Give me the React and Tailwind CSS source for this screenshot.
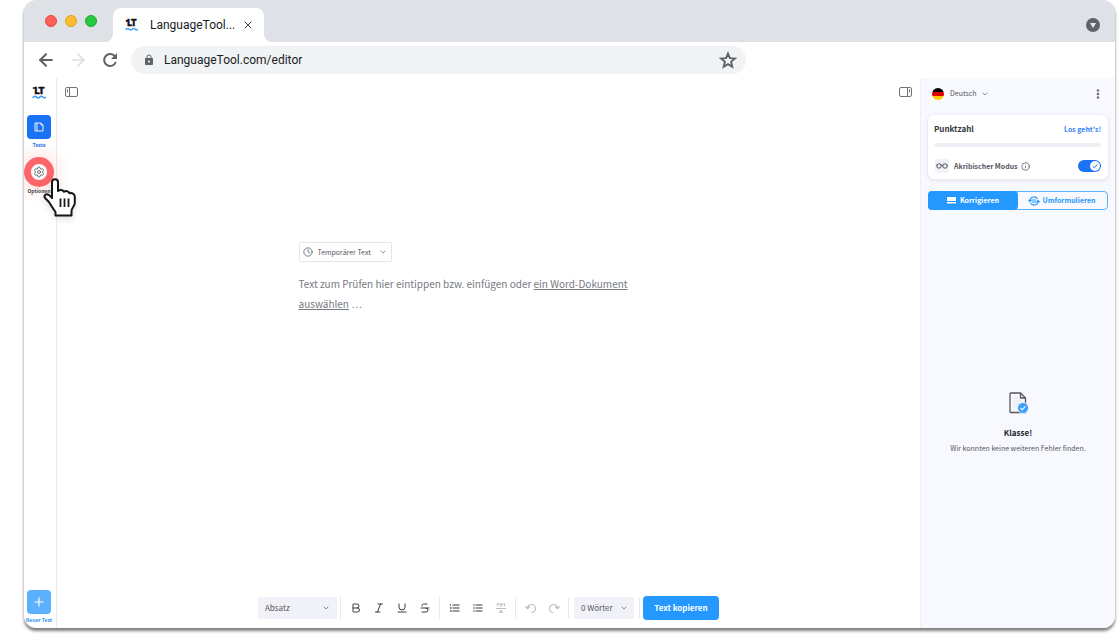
import { ArrowLeft, ArrowRight, ChevronDown, X, Plus, Settings, Clock, Info, Bold, Italic, Underline, Strikethrough } from 'lucide-react';
import { MdLock, MdFormatListNumbered, MdFormatListBulleted } from 'react-icons/md';

const Logo = ({ className }) => (
  <svg viewBox="0 0 14 13" className={`overflow-visible ${className}`} role="img" aria-label="LanguageTool">
    <text x="7.5" y="8" textAnchor="middle" fontFamily="Roboto, sans-serif" fontSize="9.5" fontWeight="900" fill="#111" stroke="#111" strokeWidth=".5">LT</text>
    <path d="M.8 2h2.500" stroke="#111" strokeWidth="1.700" />
    <path d="M1 11.500c1.200-1.600 2.300-1.600 3.500-.4s2.300 1.200 3.300 0 2.200-1.200 3.200 0 1.800.9 2.400.2" fill="none" stroke="#3b9cf5" strokeWidth="1.500" strokeLinecap="round" />
  </svg>
);

const PanelIcon = ({ right }) => (
  <svg viewBox="0 0 13 10" className="h-[10px] w-[13px]" fill="none" stroke="#747478">
    <rect x=".5" y=".5" width="12" height="9" rx="1.5" />
    <path d={right ? 'M8.5 1v8M10.5 2.5v3' : 'M4.5 1v8M2.5 2.5v3'} />
  </svg>
);

const Divider = () => <span className="mx-[3px] h-[22px] w-px bg-[#e9e9f2]" />;

const Dropdown = ({ label, value, className, iconClass }) => (
  <div className="relative flex items-center">
    <select aria-label={label} className={`appearance-none text-[#55565f] outline-none ${className}`}>
      <option>{value}</option>
    </select>
    <ChevronDown className={`pointer-events-none absolute size-2 text-[#55565f] ${iconClass}`} />
  </div>
);

const ToolButton = ({ label, icon: Icon, muted }) => (
  <button aria-label={label} className={`flex h-[22px] w-[23px] items-center justify-center ${muted ? 'text-[#bcbcc4]' : 'text-[#3c3d45]'}`}>
    <Icon className="size-3" />
  </button>
);

const ClearFormat = ({ className }) => (
  <svg viewBox="0 0 12 12" className={className} fill="none" stroke="currentColor" strokeWidth="1.200">
    <path d="M2.500 4V2h7v2M6 2v3M1 6.500h10" />
    <path d="M6 8l2 2.500H4z" fill="currentColor" strokeWidth=".5" />
  </svg>
);

const Undo = ({ className }) => (
  <svg viewBox="0 0 12 12" className={className} fill="none" stroke="currentColor" strokeWidth="1.200">
    <path d="M2.500 6.500a4 4 0 1 1 4 4M.5 4.500l2 2.200 2.200-2" />
  </svg>
);

const Redo = ({ className }) => (
  <svg viewBox="0 0 12 12" className={className} fill="none" stroke="currentColor" strokeWidth="1.200">
    <path d="M9.500 6.500a4 4 0 1 0-4 4M11.500 4.500l-2 2.200-2.200-2" />
  </svg>
);

const Hand = () => (
  <svg viewBox="0 0 34 40" className="absolute top-[21px] left-[19px] h-10 w-[34px] drop-shadow-md" aria-hidden="true">
    <path
      d="M9 20V4.500c0-4.200 6-4.200 6 0V13c1.500-1.500 5-1.300 6 .8 1.600-1.300 4.800-.8 5.500 1.400 2.400-.8 5.300.6 5.300 3.600V25c0 3-3.300 5-3.300 8v4.500h-16V34c-2.500-3.500-4.500-6.500-6.500-10L2 20c-1.600-2.500 1.200-4.800 3.600-3.200C7.200 17.800 8 19 9 20z"
      fill="white"
      stroke="#161616"
      strokeWidth="2"
      strokeLinejoin="round"
    />
    <path d="M17.500 20.500V29M21.500 20.500V29M25.500 20.500V29" stroke="#161616" strokeWidth="1.800" />
  </svg>
);

const BrowserBar = () => (
  <header className="font-[Roboto,sans-serif] text-[#202124]">
    <div className="flex h-[42px] items-end bg-[#dee1e6] pr-[15px] pl-[21px]">
      <div className="mr-4 flex h-full items-center gap-2">
        <button aria-label="Close window" className="size-3 rounded-full border border-[#e2463f] bg-[#ff5f57]" />
        <button aria-label="Minimize window" className="size-3 rounded-full border border-[#e1a116] bg-[#febc2e]" />
        <button aria-label="Maximize window" className="size-3 rounded-full border border-[#12ac28] bg-[#28c840]" />
      </div>
      <div className="relative flex h-[34px] w-[151px] items-center rounded-t-lg bg-white pr-[10px] pl-3">
        <svg viewBox="0 0 8 8" className="absolute bottom-0 -left-2 size-2" fill="white"><path d="M8 0v8H0a8 8 0 0 0 8-8z" /></svg>
        <svg viewBox="0 0 8 8" className="absolute -right-2 bottom-0 size-2" fill="white"><path d="M0 0v8h8a8 8 0 0 1-8-8z" /></svg>
        <Logo className="mr-3 h-3 w-[13px]" />
        <span className="flex-1 text-[12px]">LanguageTool...</span>
        <button aria-label="Close tab"><X className="size-3 text-[#45484c]" strokeWidth={2} /></button>
      </div>
      <button aria-label="Search tabs" className="mb-[10px] ml-auto flex size-[14px] items-center justify-center rounded-full bg-[#5f6368]">
        <svg viewBox="0 0 6 5" className="h-[5px] w-[6px]" fill="#e8eaed"><path d="M0 0h6L3 5z" /></svg>
      </button>
    </div>
    <div className="flex h-9 items-center bg-white pl-3">
      <button aria-label="Back" className="mr-3"><ArrowLeft className="size-5 text-[#5f6368]" strokeWidth={2.5} /></button>
      <button aria-label="Forward" className="mr-3"><ArrowRight className="size-5 text-[#dcdee1]" strokeWidth={2} /></button>
      <button aria-label="Reload" className="mr-[11px]">
        <svg viewBox="0 0 20 20" className="size-5" fill="none">
          <path d="M15 6.500A6 6 0 1 0 15.800 12" stroke="#5f6368" strokeWidth="2" />
          <path d="M17 3v6h-6z" fill="#5f6368" />
        </svg>
      </button>
      <div className="flex h-7 w-[615px] items-center rounded-full bg-[#f1f3f4] pr-2 pl-3">
        <MdLock className="mr-[9px] size-3 text-[#5f6368]" />
        <input aria-label="Address" defaultValue="LanguageTool.com/editor" className="min-w-0 flex-1 bg-transparent text-[12px] outline-none" />
        <button aria-label="Bookmark">
          <svg viewBox="0 0 20 20" className="size-5" fill="none" stroke="#5f6368" strokeWidth="1.900">
            <path d="M10 3.600l1.900 4.600 5 .4-3.800 3.200 1.200 4.900L10 14.100l-4.300 2.600 1.200-4.900-3.800-3.200 5-.4z" />
          </svg>
        </button>
      </div>
    </div>
  </header>
);

const Sidebar = () => (
  <nav className="flex w-[33px] shrink-0 flex-col items-center border-r border-[#e9e9f2] pt-2 pr-[2px] pb-1 text-[5px] leading-2 font-bold">
    <Logo className="h-[13px] w-[14px]" />
    <button className="mt-4 flex flex-col items-center gap-[2px] text-[#1a73f0]">
      <span className="flex size-6 items-center justify-center rounded-sm bg-[#1a73f5]">
        <svg viewBox="0 0 10 10" className="size-[10px]" fill="none" stroke="white" strokeWidth=".9" strokeLinejoin="round">
          <path d="M3 1h4l2 2v6H3zM7 1v2h2M3 1H1v8h2" />
        </svg>
      </span>
      Texte
    </button>
    <div className="relative mt-2 flex flex-col items-center">
      <button className="flex flex-col items-center text-[#45464f]">
        <span className="flex size-[30px] items-center justify-center rounded-full border-[7px] border-[#fc6668] bg-white shadow-[0_0_14px_6px_rgba(255,100,100,0.15)]">
          <Settings className="size-3 shrink-0 text-[#55565f]" strokeWidth={1.7} />
        </span>
        Optionen
      </button>
      <Hand />
    </div>
    <button className="mt-auto flex flex-col items-center gap-[2px] whitespace-nowrap text-[#2c94f8]">
      <span className="flex size-6 items-center justify-center rounded-sm bg-[#5cb1ff] text-white">
        <Plus className="size-[14px]" strokeWidth={2} />
      </span>
      Neuer Text
    </button>
  </nav>
);

const Editor = () => (
  <main className="flex min-w-0 flex-1 flex-col">
    <div className="flex justify-between px-2 pt-[9px]">
      <button aria-label="Toggle text list"><PanelIcon /></button>
      <button aria-label="Toggle sidebar"><PanelIcon right /></button>
    </div>
    <div className="mx-auto w-[380px] flex-1 pt-[145px]">
      <div className="relative flex w-fit items-center">
        <Clock className="pointer-events-none absolute left-1 z-10 size-[10px] text-[#55565f]" strokeWidth={1.8} />
        <Dropdown label="Text" value="Temporärer Text" className="h-5 w-[93px] rounded-xs border border-[#e4e4ee] pl-[18px] text-[7px]" iconClass="right-[5px]" />
      </div>
      <p className="mt-3 w-[350px] text-[10px] leading-5 text-[#777982]">
        Text zum Prüfen hier eintippen bzw. einfügen oder <a href="#import" className="underline">ein Word-Dokument auswählen</a> …
      </p>
    </div>
    <div className="flex items-center justify-center pb-2">
      <Dropdown label="Format" value="Absatz" className="h-[22px] w-[79px] rounded-xs bg-[#f1f1f8] pl-[7px] text-[8px]" iconClass="right-[7px]" />
      <Divider />
      <ToolButton label="Fett" icon={Bold} />
      <ToolButton label="Kursiv" icon={Italic} />
      <ToolButton label="Unterstrichen" icon={Underline} />
      <ToolButton label="Durchgestrichen" icon={Strikethrough} />
      <Divider />
      <ToolButton label="Nummerierte Liste" icon={MdFormatListNumbered} />
      <ToolButton label="Liste" icon={MdFormatListBulleted} />
      <ToolButton label="Formatierung entfernen" icon={ClearFormat} muted />
      <Divider />
      <ToolButton label="Rückgängig" icon={Undo} muted />
      <ToolButton label="Wiederholen" icon={Redo} muted />
      <Divider />
      <div className="mx-[2px]">
        <Dropdown label="Statistik" value="0 Wörter" className="h-[22px] w-[60px] rounded-xs bg-[#f1f1f8] pl-[7px] text-[8px]" iconClass="right-[6px]" />
      </div>
      <Divider />
      <button className="h-6 w-[76px] rounded-sm bg-[#2598ff] text-[8px] font-bold text-white">Text kopieren</button>
    </div>
  </main>
);

const Results = () => (
  <aside className="flex w-[195px] shrink-0 flex-col border-l border-[#eeeef5] bg-[#f8f9fe] pr-[7px] pl-[7px] text-[7px]">
    <div className="flex h-[31px] items-center pl-1">
      <svg viewBox="0 0 12 12" className="mr-[6px] size-3" aria-hidden="true">
        <clipPath id="flag"><circle cx="6" cy="6" r="6" /></clipPath>
        <g clipPath="url(#flag)">
          <path d="M0 0h12v4H0z" fill="#000" />
          <path d="M0 4h12v4H0z" fill="#e00000" />
          <path d="M0 8h12v4H0z" fill="#ffc800" />
        </g>
      </svg>
      <Dropdown label="Sprache" value="Deutsch" className="w-10 bg-transparent" iconClass="right-px" />
      <button aria-label="Menü" className="mr-2 ml-auto">
        <svg viewBox="0 0 4 10" className="h-[10px] w-1" fill="#6d6e76">
          <circle cx="2" cy="1.500" r="1.300" /><circle cx="2" cy="5" r="1.300" /><circle cx="2" cy="8.500" r="1.300" />
        </svg>
      </button>
    </div>

    <section className="mt-[6px] rounded-md bg-white pt-2 pr-[7px] pb-[6px] pl-[6px] shadow-[0_1px_4px_rgba(60,60,100,0.14)]">
      <div className="flex h-3 items-center justify-between font-bold">
        <h2 className="text-[8px] text-[#35363d]">Punktzahl</h2>
        <a href="#score" className="text-[#3582f6]">Los geht's!</a>
      </div>
      <div className="mt-2 h-1 rounded-full bg-[#efeff6]" />
      <div className="mt-3 flex h-[14px] items-center">
        <span className="mr-[5px] ml-px flex size-[14px] shrink-0 items-center justify-center rounded-xs bg-[#f1f1f8]">
          <svg viewBox="0 0 12 6" className="h-[6px] w-3 shrink-0" fill="none" stroke="#45464f" strokeWidth=".9">
            <circle cx="3" cy="3" r="2.200" /><circle cx="9" cy="3" r="2.200" /><path d="M5 2.500q1-.8 2 0M.8 2.500L0 2M11.200 2.500L12 2" />
          </svg>
        </span>
        <label htmlFor="picky" className="font-bold text-[#55565f]">Akribischer Modus</label>
        <Info className="ml-[3px] size-[9px] text-[#55565f]" strokeWidth={2} />
        <span className="relative ml-auto flex">
          <input id="picky" type="checkbox" defaultChecked className="h-3 w-[23px] appearance-none rounded-full bg-[#1a73f5]" />
          <svg viewBox="0 0 10 10" className="pointer-events-none absolute top-px right-px size-[10px]">
            <circle cx="5" cy="5" r="5" fill="white" />
            <path d="M2.700 5.200l1.700 1.600 3-3.300" fill="none" stroke="#1a73f5" />
          </svg>
        </span>
      </div>
    </section>

    <div className="mt-3 flex h-[19px] rounded-sm border border-[#5ab2ff] font-bold">
      <button className="-m-px flex flex-1 items-center justify-center gap-1 rounded-sm bg-[#2598ff] text-white">
        <svg viewBox="0 0 9 7" className="h-[7px] w-[9px]" fill="white"><path d="M0 0h9v4H0zM0 5h9v1.500H0z" /></svg>
        Korrigieren
      </button>
      <button className="flex flex-1 items-center justify-center gap-[2px] text-[#2598ff]">
        <svg viewBox="0 0 12 10" className="h-[10px] w-3" fill="none" stroke="currentColor" strokeWidth="1.200">
          <path d="M2 4.500a4 4 0 0 1 7.500-1.500M10 5.500a4 4 0 0 1-7.500 1.500M4 4h4M4 6h4M.3 3.800L2 5.500l1.500-1.700M8.500 6.200L10 4.500l1.700 1.700" />
        </svg>
        Umformulieren
      </button>
    </div>

    <div className="flex flex-1 flex-col items-center justify-center pt-2 text-center">
      <svg viewBox="0 0 20 22" className="ml-[2px] h-[22px] w-5" fill="none">
        <path d="M2 1h9.500L16.500 6v14.500H2a1 1 0 0 1-1-1V2a1 1 0 0 1 1-1zM11.500 1v5h5" stroke="#55565f" strokeWidth="1.300" />
        <path d="M4 6h5M4 9h9M4 12h7M4 15h4" stroke="#e1e2ea" />
        <circle cx="14" cy="16" r="5.500" fill="#3f9ffb" stroke="#f8f9fe" strokeWidth=".8" />
        <path d="M11.500 16.200l1.800 1.600 3-3.400" stroke="white" strokeWidth="1.100" />
      </svg>
      <h3 className="mt-[11px] text-[8px] leading-4 font-bold text-[#25262c]">Klasse!</h3>
      <p className="leading-[14px] text-[#55565f]">Wir konnten keine weiteren Fehler finden.</p>
    </div>
  </aside>
);

const App = () => (
  <div className="flex min-h-screen flex-col bg-white pr-1 pb-2 pl-6">
    <div className="flex flex-1 flex-col overflow-hidden rounded-xl bg-white font-['Noto_Sans_CJK_SC',sans-serif] shadow-[0_3px_3px_rgba(0,0,0,0.5)]">
      <BrowserBar />
      <div className="flex flex-1">
        <Sidebar />
        <Editor />
        <Results />
      </div>
    </div>
  </div>
);

export default App;
